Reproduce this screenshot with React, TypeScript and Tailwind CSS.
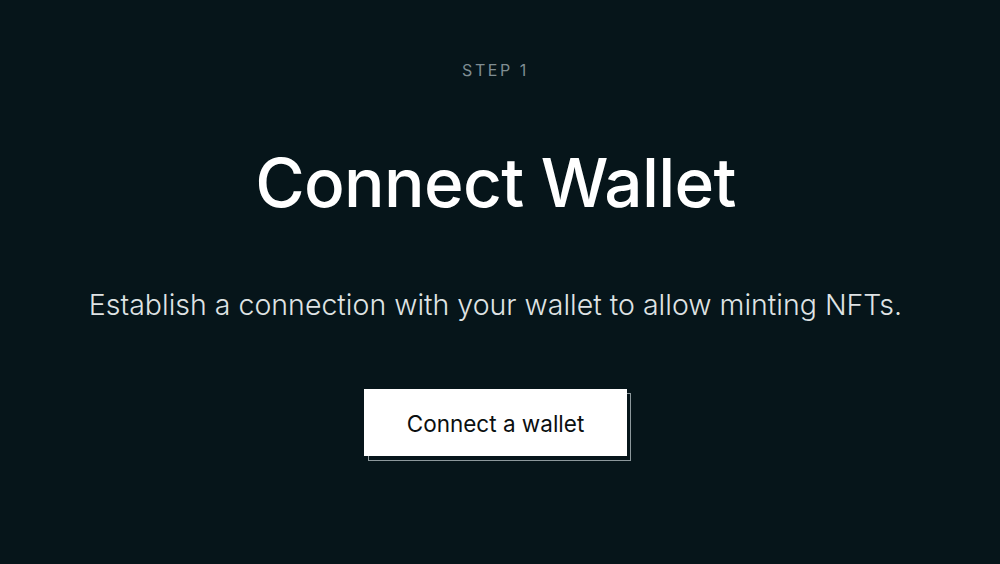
export default function App() {
  return (
    <div
      className="min-h-[564px] w-full bg-[#06151a] flex flex-col items-center pt-[58px] pr-[9px]"
      style={{ fontFamily: 'Inter, "Liberation Sans", Arial, sans-serif' }}
    >
      <p className="text-[16px] tracking-[0.16em] text-[#7f8d92] leading-[24px]">STEP 1</p>
      <h1 className="mt-[61px] text-[67.5px] font-medium leading-[80px] text-white tracking-[-0.01em]">
        Connect Wallet
      </h1>
      <p className="mt-[64px] text-[28.5px] leading-[36px] text-[#dfe3e4] font-light">
        Establish a connection with your wallet to allow minting NFTs.
      </p>
      <div className="mt-[66px] relative">
        <div className="absolute left-[4px] top-[4px] w-[263px] h-[68px] border border-[#8d989c]" />
        <button className="relative w-[263px] h-[67px] pt-[3px] bg-white text-[#0b0f10] text-[22.5px]">
          Connect a wallet
        </button>
      </div>
    </div>
  );
}
